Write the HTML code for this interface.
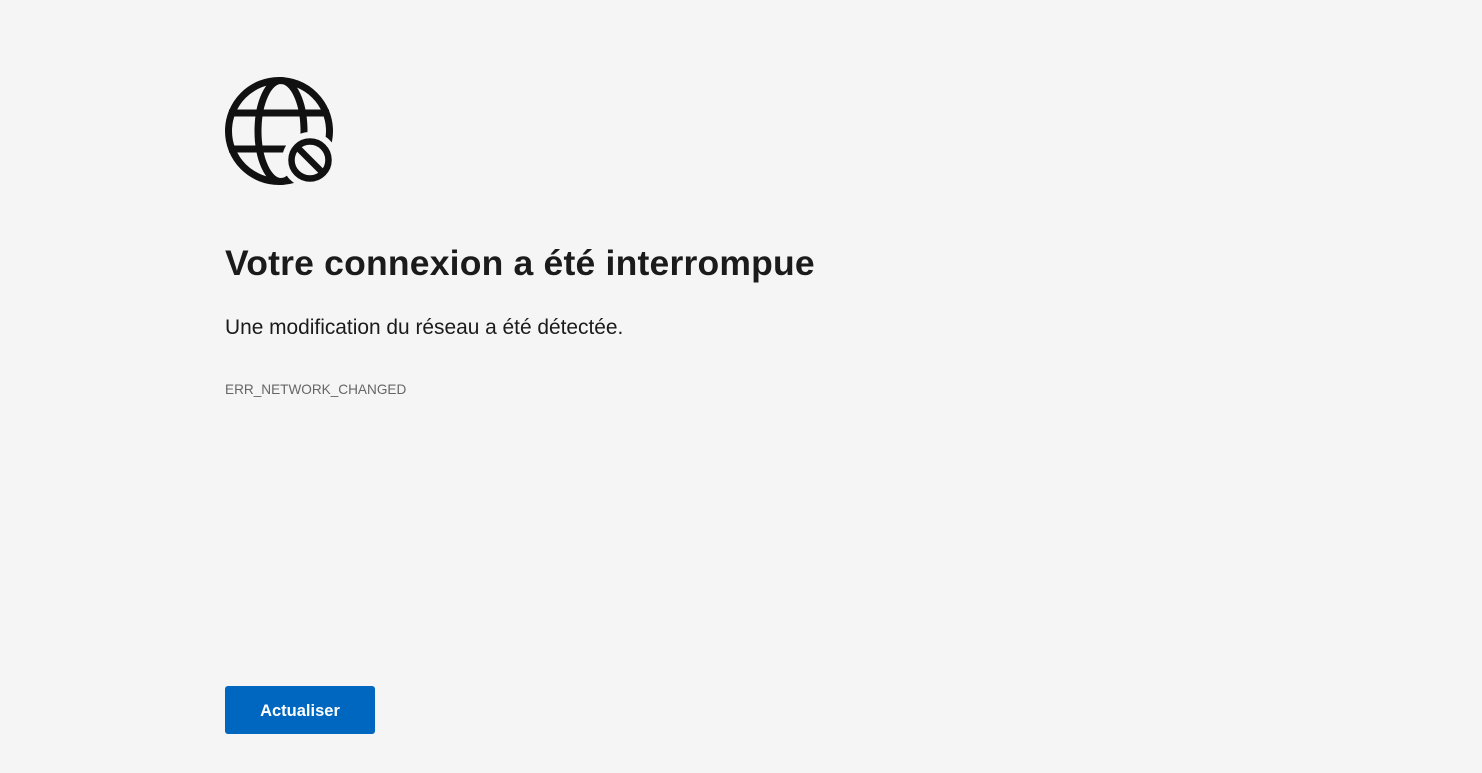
<!DOCTYPE html>
<html><head><meta charset="utf-8"><style>
html,body{margin:0;height:100%;background:#f5f5f5;font-family:"Liberation Sans",sans-serif;}
svg{position:absolute;left:220px;top:72px}
h1{position:absolute;left:225px;top:243px;margin:0;font-size:35.5px;font-weight:bold;color:#1b1b1b;white-space:nowrap;letter-spacing:0.2px}
.p{position:absolute;left:225px;top:316px;font-size:20.9px;color:#1b1b1b;white-space:nowrap}
.c{position:absolute;left:225px;top:382px;font-size:13.6px;color:#666;white-space:nowrap}
.b{position:absolute;left:225px;top:686px;width:150px;height:48px;background:#0067c0;border-radius:3px;color:#fff;font-weight:bold;font-size:16.5px;line-height:50px;text-align:center}
</style></head><body>
<svg width="120" height="120" viewBox="0 0 120 120">
<g fill="none" stroke="#111" stroke-width="7">
<circle cx="59" cy="59" r="50.5"/>
<ellipse cx="61" cy="59" rx="23" ry="50.5"/>
<line x1="9" y1="41" x2="109" y2="41"/>
<line x1="9" y1="77" x2="109" y2="77"/>
</g>
<circle cx="90" cy="88" r="28" fill="#f5f5f5"/>
<g fill="none" stroke="#111" stroke-width="6.5">
<circle cx="90" cy="88" r="18.5"/>
<line x1="77" y1="75" x2="103" y2="101"/>
</g>
</svg>
<h1>Votre connexion a été interrompue</h1>
<div class="p">Une modification du réseau a été détectée.</div>
<div class="c">ERR_NETWORK_CHANGED</div>
<div class="b">Actualiser</div>
</body></html>
